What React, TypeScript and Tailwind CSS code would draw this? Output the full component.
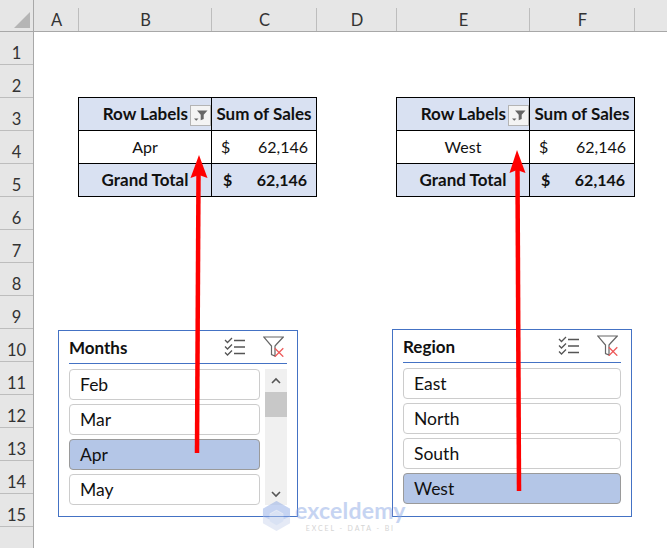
import React from "react";

const rows = [1,2,3,4,5,6,7,8,9,10,11,12,13,14,15];
const cols = [
  { l: "A", c: "w-[45px]" },
  { l: "B", c: "w-[133px]" },
  { l: "C", c: "w-[105px]" },
  { l: "D", c: "w-[80px]" },
  { l: "E", c: "w-[133px]" },
  { l: "F", c: "w-[105px]" },
  { l: "", c: "w-[33px]" },
];

function Funnel() {
  return (
    <svg width="19" height="19" viewBox="0 0 19 19" className="block">
      <path d="M6 4.500h10.500l-3.800 4.200v4.300l-3 1.300v-5.600z" fill="#666" />
      <path d="M3 12.500h4.500l-2.200 2.200z" fill="#666" />
    </svg>
  );
}

function PivotTable({ label }: { label: string }) {
  return (
    <div className="w-[239px] h-[100px] border border-black grid grid-cols-[133px_1fr] grid-rows-[33px_33px_1fr] text-[16px] leading-none text-[#111]">
      <div className="bg-[#d9e1f2] border-r border-b border-black flex items-center justify-end pt-[2px]">
        <span className="font-bold text-[17px] mr-[2px] mb-[3px]">Row Labels</span>
        <div className="w-[21px] h-[21px] mt-[1px] border border-[#b4b4b4] bg-[#f4f4f4]">
          <Funnel />
        </div>
      </div>
      <div className="bg-[#d9e1f2] border-b border-black flex items-center justify-center font-bold text-[17px]">
        <span className="mb-[1px]">Sum of Sales</span>
      </div>
      <div className="bg-white border-r border-b border-black flex items-center justify-center">
        <span>{label}</span>
      </div>
      <div className="bg-white border-b border-black flex items-center justify-between pl-[9px] pr-[8px]">
        <span>$</span>
        <span>62,146</span>
      </div>
      <div className="bg-[#d9e1f2] border-r border-black flex items-center justify-center font-bold text-[17px]">
        <span className="mb-[2px]">Grand Total</span>
      </div>
      <div className="bg-[#d9e1f2] flex items-center justify-between pl-[11px] pr-[9px] font-bold">
        <span>$</span>
        <span>62,146</span>
      </div>
    </div>
  );
}

function SlicerIcons() {
  return (
    <div className="flex items-center gap-[18px] mb-[1px]">
      <svg width="21" height="20" viewBox="0 0 21 20" fill="none" stroke="#555" strokeWidth="1.300">
        <path d="M1 3l2.500 2.500L8 1M1 9.500l2.500 2.500L8 7.500M1 15.500l2.500 2.500L8 13.500" />
        <path d="M10 3.500h11M10 10h11M10 16.500h11" strokeWidth="1.500" />
      </svg>
      <svg width="21" height="21" viewBox="0 0 21 21" fill="none">
        <path d="M.700 1h19.600l-7 7.500-1.300 1.500v10l-3.500-1.500v-8.500z" stroke="#666" strokeWidth="1.200" fill="#fff" />
        <path d="M11.800 12.200l8.500 8.500M20.300 12.200l-8.500 8.500" stroke="#ee5a5a" strokeWidth="1.300" />
      </svg>
    </div>
  );
}

function Slicer({ title, items, selected, scroll, className }: { title: string; items: string[]; selected: string; scroll?: boolean; className: string }) {
  return (
    <div className={`absolute w-[240px] bg-white border border-[#4472c4] px-[10px] ${className}`}>
      <div className="h-[33px] flex items-center justify-between border-b border-[#4472c4] pr-[3px]">
        <span className="font-bold text-[17px] leading-none text-[#111]">{title}</span>
        <SlicerIcons />
      </div>
      <div className="flex gap-[5px] mt-[5px]">
        <div className="flex-1 flex flex-col gap-[4px]">
          {items.map((it) => (
            <div
              key={it}
              className={
                it === selected
                  ? "h-[31px] rounded-[4px] border border-[#9a9a9a] bg-[#b4c6e7] flex items-center pl-[10px] pt-[2px] text-[17.500px] text-[#111]"
                  : "h-[31px] rounded-[4px] border border-[#cccccc] bg-white flex items-center pl-[10px] pt-[2px] text-[17.500px] text-[#111]"
              }
            >
              {it}
            </div>
          ))}
        </div>
        {scroll && (
          <div className="w-[22px] bg-[#f0f0f0] flex flex-col items-center h-[136px]">
            <div className="h-[23px] flex items-center justify-center">
              <svg width="10" height="7" viewBox="0 0 10 7" fill="none" stroke="#555" strokeWidth="1.600"><path d="M1 6l4-4 4 4" /></svg>
            </div>
            <div className="h-[25px] w-full bg-[#c8c8c8]" />
            <div className="flex-1 flex items-end pb-[7px]">
              <svg width="10" height="7" viewBox="0 0 10 7" fill="none" stroke="#555" strokeWidth="1.600"><path d="M1 1l4 4 4-4" /></svg>
            </div>
          </div>
        )}
      </div>
    </div>
  );
}

export default function App() {
  return (
    <div className="relative w-[667px] h-[548px] overflow-hidden bg-white font-['Lato','Liberation_Sans',sans-serif]">
      {/* column headers */}
      <div className="flex h-[32px] bg-[#e6e6e6] border-b border-[#a8a8a8]">
        <div className="relative w-[34px] shrink-0 border-r border-[#a8a8a8]">
          <div className="absolute left-[14px] top-[12px] w-0 h-0 border-l-[16px] border-l-transparent border-b-[16px] border-b-[#b5b5b5]" />
        </div>
        {cols.map((c, i) => (
          <div key={i} className={`${c.c} shrink-0 flex items-end justify-center relative pb-[1px] text-[16.500px] leading-[20px] text-[#333]`}>
            {c.l}
            <div className="absolute right-0 top-[8px] bottom-0 w-px bg-[#bdbdbd]" />
          </div>
        ))}
      </div>
      <div className="flex">
        {/* row headers */}
        <div className="w-[34px] shrink-0 bg-[#e6e6e6] border-r border-[#a8a8a8] h-[516px]">
          {rows.map((r) => (
            <div key={r} className="h-[33px] border-b border-[#bdbdbd] flex items-center justify-center pt-[11px] text-[16.500px] leading-none text-[#333]">
              {r}
            </div>
          ))}
        </div>
        {/* sheet */}
        <div className="flex-1 pt-[65px] pl-[44px] flex gap-[79px] items-start">
          <PivotTable label="Apr" />
          <PivotTable label="West" />
        </div>
      </div>

      <Slicer title="Months" items={["Feb", "Mar", "Apr", "May"]} selected="Apr" scroll className="left-[58px] top-[330px] h-[187px]" />
      <Slicer title="Region" items={["East", "North", "South", "West"]} selected="West" className="left-[392px] top-[329px] h-[188px]" />

      {/* watermark */}
      <div className="absolute left-[262px] top-[499px] flex items-start gap-[4px] opacity-50 pointer-events-none">
        <svg width="29" height="32" viewBox="0 0 30 33" className="mt-[1px]">
          <path d="M15 1l14 8v15l-14 8-14-8V9z" fill="#ccd6ee" />
          <path d="M15 1l14 8v8l-7 3v-6l-7-4-7 4v6l-7-3V9z" fill="#8fabe6" />
          <path d="M15 11l7 4v7l-7 4-7-4v-7z" fill="#b5c6ea" />
        </svg>
        <div className="flex flex-col items-center">
          <span className="font-bold text-[23px] leading-[22px] h-[22px] text-[#8fabe6] tracking-[0.2px]">exceldemy</span>
          <span className="text-[7px] leading-[7px] mt-[3.500px] text-[#aaaaaa] tracking-[1.900px] whitespace-nowrap">EXCEL - DATA - BI</span>
        </div>
      </div>

      {/* arrows */}
      <svg className="absolute left-0 top-0 pointer-events-none" width="667" height="548" viewBox="0 0 667 548">
        <path d="M197 453L198.500 175" stroke="#ff0000" strokeWidth="4.500" fill="none" />
        <path d="M199 155L207.500 178L199 175L190.500 178z" fill="#ff0000" />
        <path d="M519 491L517.500 170" stroke="#ff0000" strokeWidth="4.500" fill="none" />
        <path d="M517 150L525.500 173L517 170L509.500 173z" fill="#ff0000" />
      </svg>
    </div>
  );
}
